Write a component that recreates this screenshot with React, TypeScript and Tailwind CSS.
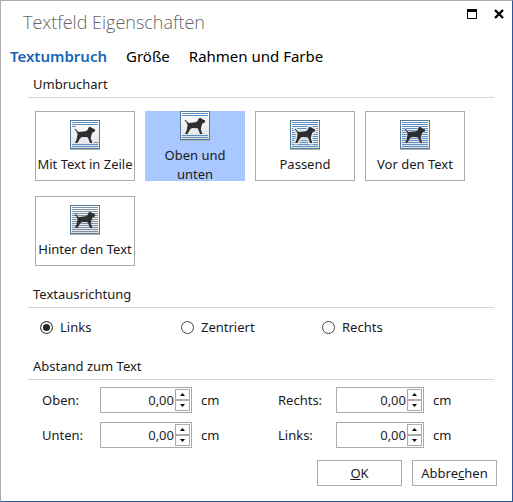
import { useState } from 'react';
import type { ReactNode } from 'react';

type Wrap = 'inline' | 'topBottom' | 'tight' | 'front' | 'behind';

const TABS = ['Textumbruch', 'Größe', 'Rahmen und Farbe'];

const WRAPS: { id: Wrap; label: string }[] = [
  { id: 'inline',    label: 'Mit Text in Zeile' },
  { id: 'topBottom', label: 'Oben und unten' },
  { id: 'tight',     label: 'Passend' },
  { id: 'front',     label: 'Vor den Text' },
  { id: 'behind',    label: 'Hinter den Text' },
];

const ALIGNS = ['Links', 'Zentriert', 'Rechts'];

// [x, y, width] of every text line behind the dog
const ROWS = [2, 4, 6, 8, 10, 12, 14, 16, 18, 20, 22, 24, 26];
const LINES: Record<Wrap, number[][]> = {
  inline:    [[2, 2, 26], [2, 4, 26], [2, 6, 4], [24, 22, 4], [2, 24, 26], [2, 26, 26]],
  topBottom: [[2, 2, 26], [2, 4, 26], [2, 24, 26], [2, 26, 26]],
  tight:     ROWS.map(y => [2, y, 26]),
  front:     ROWS.map(y => [2, y, 26]),
  behind:    ROWS.map(y => [2, y, 26]),
};

const DOG =
  'M4.6 9L5.4 8.8L8.6 11.9L15.6 11.2L17.6 10L18.6 7.6L20.4 6.8L22 8L25.2 9.6L24.8 11.4L22.4 12.6L21.2 16L20.8 18.4L22.4 23H20L18.2 18.2L17.6 17.2L12 17L10.2 18.2L7.4 23H5L6.6 19.6L7.6 14L6.6 11.8Z';

function WrapIcon({ kind }: { kind: Wrap }) {
  return (
    <svg width="30" height="30" viewBox="0 0 30 30" className="shrink-0" aria-hidden="true">
      <defs>
        <linearGradient id={`paper-${kind}`} x1="0" y1="0" x2="0" y2="1">
          <stop offset="0" stopColor="#ffffff" />
          <stop offset="1" stopColor="#dfe1e3" />
        </linearGradient>
      </defs>
      <rect x="0.5" y="0.5" width="29" height="28" fill={`url(#paper-${kind})`} stroke="#557a96" />
      <path d="M0 29.5H30" stroke="#a9b3bb" />
      {LINES[kind].map(([x, y, w]) => (
        <rect key={`${x}-${y}`} x={x} y={y} width={w} height="1" fill={kind === 'behind' ? '#8093a6' : '#5f8fc4'} />
      ))}
      {kind === 'tight' && (
        <path d={DOG} fill="#e8eaec" stroke="#e8eaec" strokeWidth="3" strokeLinejoin="round" />
      )}
      {kind === 'front' && (
        <path d={DOG} fill="#e8eaec" stroke="#e8eaec" strokeWidth="1" strokeLinejoin="round" />
      )}
      <path d={DOG} fill="#2f2f31" />
    </svg>
  );
}

function Section({ title, children }: { title: string; children: ReactNode }) {
  return (
    <section>
      <h2 className="border-b border-[#d4d4d4] pt-1 pl-[5px] pb-[2px] leading-[21px]">{title}</h2>
      {children}
    </section>
  );
}

function SpinField({ id, label, width }: { id: string; label: string; width: string }) {
  const [value, setValue] = useState(0);
  const step = (d: number) => setValue(v => Math.max(0, Math.round((v + d) * 100) / 100));

  return (
    <div className="flex items-center">
      <label htmlFor={id} className="w-[58px]">{label}</label>
      <div className={`flex h-[26px] border border-[#ababab] p-px ${width}`}>
        <input
          id={id}
          value={value.toFixed(2).replace('.', ',')}
          onChange={e => setValue(parseFloat(e.target.value.replace(',', '.')) || 0)}
          className="min-w-0 flex-1 pr-px text-right text-[#262626] outline-none"
        />
        <div className="flex w-[15px] flex-col">
          <button
            aria-label={`${label} erhöhen`}
            onClick={() => step(0.1)}
            className="flex flex-1 items-center justify-center border border-[#ababab]"
          >
            <svg width="5" height="3" viewBox="0 0 5 3"><path d="M0 3L2.5 0L5 3Z" /></svg>
          </button>
          <button
            aria-label={`${label} verringern`}
            onClick={() => step(-0.1)}
            className="flex flex-1 items-center justify-center border border-[#ababab]"
          >
            <svg width="5" height="3" viewBox="0 0 5 3"><path d="M0 0L2.5 3L5 0Z" /></svg>
          </button>
        </div>
      </div>
      <span className="ml-[9px]">cm</span>
    </div>
  );
}

export default function App() {
  const [tab, setTab] = useState(0);
  const [wrap, setWrap] = useState<Wrap>('topBottom');
  const [align, setAlign] = useState('Links');

  return (
    <div
      role="dialog"
      aria-labelledby="dialog-title"
      className="min-h-screen border border-t-[#ababab] border-l-[#ababab] border-r-[#2b579a] border-b-[#2b579a] bg-white font-['Noto_Sans',sans-serif] text-[13px] leading-[19px] text-[#1a1a1a]"
    >
      <header className="flex items-start justify-between pt-2 pr-2 pl-[22px]">
        <h1 id="dialog-title" className="font-['Open_Sans',sans-serif] text-[18px] leading-[26px] font-light text-[#666]">
          Textfeld Eigenschaften
        </h1>
        <div className="flex gap-[17px]">
          <button aria-label="Maximieren">
            <svg width="10" height="10" viewBox="0 0 10 10">
              <path d="M0.5 1H9.5V9.5H0.5Z" fill="none" stroke="#000" />
              <path d="M0 0H10V3H0Z" />
            </svg>
          </button>
          <button aria-label="Schließen">
            <svg width="10" height="10" viewBox="0 0 10 10">
              <path d="M1 1L9 9M9 1L1 9" stroke="#000" strokeWidth="2.4" />
            </svg>
          </button>
        </div>
      </header>

      <nav role="tablist" className="mt-[9px] flex gap-[19px] pl-[9px] text-[15px] leading-[24px] text-black">
        {TABS.map((t, i) => (
          <button
            key={t}
            role="tab"
            aria-selected={tab === i}
            onClick={() => setTab(i)}
            className={tab === i ? 'font-semibold text-[#1666b8]' : ''}
          >
            {t}
          </button>
        ))}
      </nav>

      <main className="pt-[2px] pr-[18px] pl-[27px]">
        <Section title="Umbruchart">
          <div className="flex flex-wrap gap-x-[10px] gap-y-[15px] pt-[13px] pl-[7px]">
            {WRAPS.map(w => (
              <button
                key={w.id}
                aria-pressed={wrap === w.id}
                onClick={() => setWrap(w.id)}
                className={`flex h-[70px] w-[100px] flex-col items-center gap-[5px] ${
                  wrap === w.id ? 'bg-[#a8c8ff] px-4' : 'border border-[#ababab] pt-2'
                }`}
              >
                <WrapIcon kind={w.id} />
                <span className={wrap === w.id ? '' : 'whitespace-nowrap'}>{w.label}</span>
              </button>
            ))}
          </div>
        </Section>

        <div className="mt-[14px]">
          <Section title="Textausrichtung">
            <div className="flex pt-[10px] pl-3">
              {ALIGNS.map(a => (
                <label key={a} className="flex w-[141px] items-center gap-[7px]">
                  <input
                    type="radio"
                    name="align"
                    checked={align === a}
                    onChange={() => setAlign(a)}
                    className="size-[13px] appearance-none rounded-full border border-[#444] bg-white checked:bg-[#262626] checked:shadow-[inset_0_0_0_2px_#fff]"
                  />
                  {a}
                </label>
              ))}
            </div>
          </Section>
        </div>

        <div className="mt-[15px]">
          <Section title="Abstand zum Text">
            <div className="grid grid-cols-[236px_1fr] gap-y-[9px] pt-[7px] pl-[14px]">
              <SpinField id="top" label="Oben:" width="w-[92px]" />
              <SpinField id="right" label="Rechts:" width="w-[88px]" />
              <SpinField id="bottom" label="Unten:" width="w-[92px]" />
              <SpinField id="left" label="Links:" width="w-[88px]" />
            </div>
          </Section>
        </div>
      </main>

      <footer className="flex justify-end gap-[10px] pt-3 pr-[15px] pb-[14px]">
        <button className="h-[26px] w-[85px] border border-[#ababab]">
          <u>O</u>K
        </button>
        <button className="h-[26px] w-[85px] border border-[#ababab]">
          Abbre<u>c</u>hen
        </button>
      </footer>
    </div>
  );
}
